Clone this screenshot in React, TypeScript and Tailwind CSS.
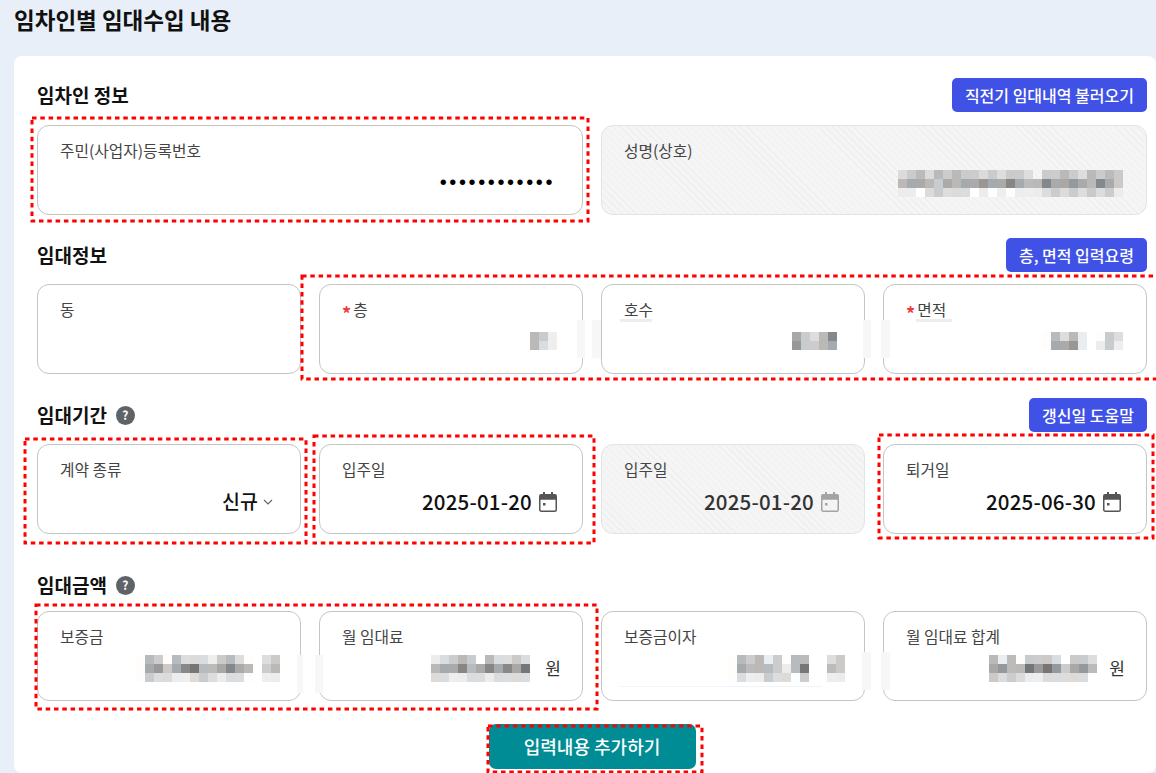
import React from "react";

const shade = (ch: string, col: number) => {
  const v = parseInt(ch, 16) * 17;
  const t = col % 3;
  if (t === 0) return `rgb(${v},${v - 2},${v - 3})`;
  if (t === 1) return `rgb(${v - 3},${v},${v + 2 > 255 ? 255 : v + 2})`;
  return `rgb(${v},${v},${v})`;
};

function Mosaic({ rows, cell = 9 }: { rows: string[]; cell?: number }) {
  const w = rows[0].length * cell;
  const h = rows.length * cell;
  return (
    <svg width={w} height={h} className="block shrink-0">
      {rows.map((r, y) =>
        r.split("").map((c, x) =>
          c === "." ? null : <rect key={`${x}-${y}`} x={x * cell} y={y * cell} width={cell} height={cell} fill={shade(c, x)} />
        )
      )}
    </svg>
  );
}

function CalendarIcon({ muted }: { muted?: boolean }) {
  const c = muted ? "#a3a3a3" : "#555555";
  return (
    <svg width="18" height="21" viewBox="1 0 18 21" className="shrink-0">
      <rect x="5" y="1" width="2" height="4" fill={c} />
      <rect x="13" y="1" width="2" height="4" fill={c} />
      <rect x="1.75" y="3.75" width="16.5" height="16.5" rx="1.5" fill="none" stroke={c} strokeWidth="1.5" />
      <rect x="1.75" y="3.75" width="16.5" height="5" fill={c} />
      <rect x="5" y="12" width="2.5" height="2.5" fill={c} />
    </svg>
  );
}

function Field({
  label,
  required,
  disabled,
  children,
}: {
  label: string;
  required?: boolean;
  disabled?: boolean;
  children?: React.ReactNode;
}) {
  return (
    <div
      className={
        disabled
          ? "h-[90px] rounded-[12px] border border-[#e2e3e8] bg-[repeating-linear-gradient(45deg,#f5f5f5,#f5f5f5_4px,#efefef_4px,#efefef_5px)] pl-[22px] pr-[23px] pt-[13px]"
          : "h-[90px] rounded-[12px] border border-[#c4c4c4] bg-white pl-[22px] pr-[23px] pt-[13px]"
      }
    >
      <div className="flex h-[24px] items-center text-[15.75px] leading-[24px] text-[#444444]">
        {required && <span className="mr-[2px] translate-y-[3px] text-[18px] font-bold leading-none text-[#ee3b3b]">*</span>}
        {label}
      </div>
      <div className="mt-[4px] flex h-[30px] items-center justify-end">{children}</div>
    </div>
  );
}

function DateValue({ value, muted }: { value: string; muted?: boolean }) {
  return (
    <div className={muted ? "mr-[2px] flex items-center gap-[7px] text-[#333333]" : "mr-[2px] flex items-center gap-[7px] text-[#111111]"}>
      <span className="text-[20.5px] font-medium tracking-[0.2px]">{value}</span>
      <CalendarIcon muted={muted} />
    </div>
  );
}

function Won({ rows, gap }: { rows: string[]; gap: string }) {
  return (
    <div className={gap}>
      <Mosaic rows={rows} />
      <span className="text-[17px] text-[#333333]">원</span>
    </div>
  );
}

function Help() {
  return (
    <span className="ml-[9px] flex h-[19px] w-[19px] items-center justify-center rounded-full bg-[#5f6368] text-[12px] font-bold leading-none text-white">
      ?
    </span>
  );
}

function ActionButton({ children }: { children: React.ReactNode }) {
  return (
    <button className="flex h-[34px] items-center rounded-[5px] bg-[#4051e5] px-[13px] text-[16px] font-medium text-white">
      {children}
    </button>
  );
}

function Header({ title, help, action }: { title: string; help?: boolean; action?: string }) {
  return (
    <div className="flex h-[34px] items-center justify-between">
      <div className="flex items-center">
        <h2 className="text-[19px] font-bold leading-[34px] text-[#111111]">{title}</h2>
        {help && <Help />}
      </div>
      {action && <ActionButton>{action}</ActionButton>}
    </div>
  );
}

const boxes = [
  [32, 118, 556, 103],
  [302, 276, 870, 103],
  [25, 439, 281, 104],
  [314, 436, 280, 107],
  [879, 435, 274, 103],
  [36, 605, 561, 104],
  [488, 726, 214, 46],
];

const smudges = [
  [577, 320, 8, 38],
  [592, 320, 9, 38],
  [863, 320, 8, 38],
  [881, 320, 9, 38],
  [297, 655, 6, 38],
  [315, 655, 8, 38],
  [862, 652, 9, 38],
  [881, 652, 9, 38],
];

const under = [
  [620, 319, 32, 3],
  [916, 319, 36, 3],
];

export default function App() {
  return (
    <div
      className="relative h-[773px] w-[1156px] overflow-hidden bg-[#e8eff9]"
      style={{ fontFamily: '"Noto Sans CJK KR", "Noto Sans", sans-serif' }}
    >
      <div className="flex h-[56px] items-start pl-[14px]">
        <h1 className="text-[22.5px] font-bold leading-[38px] text-[#111111]">임차인별 임대수입 내용</h1>
      </div>

      <div className="ml-[14px] h-[717px] rounded-[8px] bg-white pl-[23px] pr-[9px] pt-[22px]">
        <Header title="임차인 정보" action="직전기 임대내역 불러오기" />
        <div className="mt-[13px] grid grid-cols-2 gap-[18px]">
          <Field label="주민(사업자)등록번호">
            <span className="mr-[4px] text-[20px] leading-none tracking-[2.6px] text-black" style={{ fontFamily: '"Liberation Sans", sans-serif' }}>
              ••••••••••••
            </span>
          </Field>
          <Field label="성명(상호)" disabled>
            <div className="mt-[2px]">
              <Mosaic
                rows={[
                  "dcbdbcbccdcdccd.ccbcdbcbc",
                  "baabcabaa9aa8abb8aa9ab8ac",
                  "eefdcdddfefefeeedcdcdcdce",
                ]}
              />
            </div>
          </Field>
        </div>

        <div className="mt-[23px]">
          <Header title="임대정보" action="층, 면적 입력요령" />
        </div>
        <div className="mt-[12px] grid grid-cols-4 gap-[18px]">
          <Field label="동" />
          <Field label="층" required>
            <div className="mr-[2px]">
              <Mosaic rows={["bce", "bde"]} />
            </div>
          </Field>
          <Field label="호수">
            <div className="mr-[4px]">
              <Mosaic rows={["acdb8", "9ccba"]} />
            </div>
          </Field>
          <Field label="면적" required>
            <Mosaic rows={["fbdbe.fcd", "faa9e.ece"]} />
          </Field>
        </div>

        <div className="mt-[24px]">
          <Header title="임대기간" help action="갱신일 도움말" />
        </div>
        <div className="mt-[12px] grid grid-cols-4 gap-[18px]">
          <Field label="계약 종류">
            <div className="mr-[4px] flex items-center gap-[5px]">
              <span className="text-[19.5px] font-medium text-[#111111]">신규</span>
              <svg width="10" height="6" viewBox="0 0 10 6" className="mt-[1px]">
                <path d="M1 1l4 4 4-4" fill="none" stroke="#666666" strokeWidth="1.2" />
              </svg>
            </div>
          </Field>
          <Field label="입주일">
            <DateValue value="2025-01-20" />
          </Field>
          <Field label="입주일" disabled>
            <DateValue value="2025-01-20" muted />
          </Field>
          <Field label="퇴거일">
            <DateValue value="2025-06-30" />
          </Field>
        </div>

        <div className="mt-[34px]">
          <Header title="임대금액" help />
        </div>
        <div className="mt-[9px] grid grid-cols-4 gap-[18px]">
          <Field label="보증금">
            <div className="-mr-[3px]">
              <Mosaic rows={["fbcfbdddecbdf.dc", "fa9ca87bba8ab.cb", "fcddeedcdeddf.ee"]} />
            </div>
          </Field>
          <Field label="월 임대료">
            <div className="-mr-[2px]">
              <Won gap="flex items-center gap-[15px]" rows={["edcbcfbddcd", "baa8ba8a8a7", "ddeeddedddd"]} />
            </div>
          </Field>
          <Field label="보증금이자">
            <div className="-mr-[4px]">
              <Mosaic rows={["fbcbecfbb..dc", "fabbbceb7..bc", "fdeecddfc..ee"]} />
            </div>
          </Field>
          <Field label="월 임대료 합계">
            <div className="-mr-[2px]">
              <Won gap="flex items-center gap-[12px]" rows={["bebfcccdfccd", "a9bb7979ca9b", "cdcdeedddddf"]} />
            </div>
          </Field>
        </div>

        <div className="mt-[23px] flex justify-center">
          <button className="flex h-[45px] w-[207px] items-center justify-center rounded-[7px] bg-[#008c95] text-[18px] font-medium text-white">
            입력내용 추가하기
          </button>
        </div>
      </div>

      <svg className="pointer-events-none absolute left-0 top-0" width="1156" height="773">
        {smudges.map(([x, y, w, h], i) => (
          <rect key={i} x={x} y={y} width={w} height={h} fill="#f7f7f7" />
        ))}
        {under.map(([x, y, w, h], i) => (
          <rect key={i} x={x} y={y} width={w} height={h} fill="#ededed" />
        ))}
        <rect x="620" y="686" width="202" height="1" fill="#eef3fd" />
        {boxes.map(([x, y, w, h], i) => (
          <rect key={i} x={x} y={y} width={w} height={h} fill="none" stroke="#ff0000" strokeWidth="3" strokeDasharray="4.5 3.8" />
        ))}
      </svg>
    </div>
  );
}
